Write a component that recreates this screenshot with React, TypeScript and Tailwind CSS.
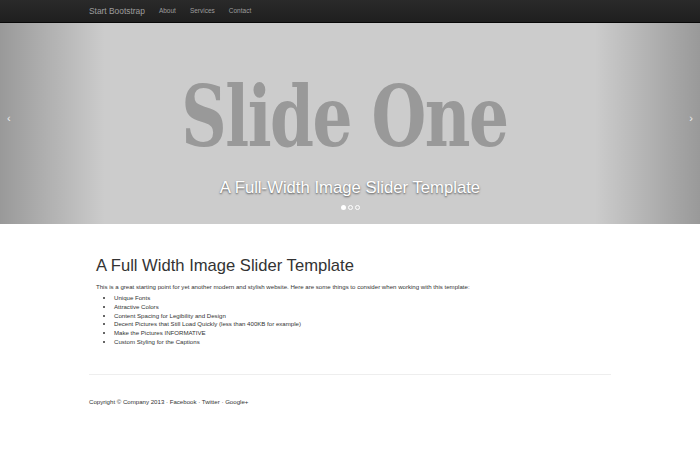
const items = [
  "Unique Fonts",
  "Attractive Colors",
  "Content Spacing for Legibility and Design",
  "Decent Pictures that Still Load Quickly (less than 400KB for example)",
  "Make the Pictures INFORMATIVE",
  "Custom Styling for the Captions",
];

export default function App() {
  return (
    <div className="w-[700px] h-[450px] bg-white text-[#333] font-['Liberation_Sans',Arial,sans-serif] overflow-hidden">
      {/* navbar */}
      <nav className="h-[23px] bg-gradient-to-b from-[#2a2a2a] to-[#1f1f1f] border-b border-[#080808]">
        <div className="w-[522px] mx-auto h-full flex items-center">
          <span className="text-[8.4px] text-[#9d9d9d]">Start Bootstrap</span>
          <div className="flex gap-[14px] ml-[14px] text-[6.5px] text-[#9d9d9d]">
            <span>About</span>
            <span>Services</span>
            <span>Contact</span>
          </div>
        </div>
      </nav>

      {/* carousel */}
      <div className="relative h-[201px] bg-[#cccccc] flex flex-col items-center">
        <div className="absolute left-0 top-0 h-full w-[105px] bg-gradient-to-r from-black/25 to-transparent" />
        <div className="absolute right-0 top-0 h-full w-[105px] bg-gradient-to-l from-black/25 to-transparent" />
        <span className="absolute left-[7px] top-[87px] text-[11px] text-white/80">‹</span>
        <span className="absolute right-[7px] top-[87px] text-[11px] text-white/80">›</span>

        <div className="mt-[51px] mr-[12px] leading-none text-[85px] font-bold text-[#999] font-['DejaVu_Serif',serif] tracking-[-2px] scale-x-[0.74] whitespace-nowrap">
          Slide One
        </div>
        <div className="mt-[16px] text-[16.7px] text-white [text-shadow:0_1px_2px_rgba(0,0,0,0.6)]">
          A Full-Width Image Slider Template
        </div>
        <div className="mt-[5px] flex gap-[2px] items-center">
          <span className="w-[5px] h-[5px] rounded-full bg-white" />
          <span className="w-[5px] h-[5px] rounded-full border border-white" />
          <span className="w-[5px] h-[5px] rounded-full border border-white" />
        </div>
      </div>

      {/* content */}
      <div className="w-[522px] mx-auto">
        <div className="px-[7px]">
          <h1 className="mt-[31px] text-[16.6px] leading-[22px] text-[#333]">A Full Width Image Slider Template</h1>
          <p className="mt-[5px] text-[6.1px] leading-[9px]">
            This is a great starting point for yet another modern and stylish website. Here are some things to consider when working with this template:
          </p>
          <ul className="mt-[3px] pl-[18px] list-disc text-[6.1px] leading-[8.8px]">
            {items.map((t) => (
              <li key={t}>{t}</li>
            ))}
          </ul>
        </div>
        <hr className="mt-[27px] border-[#eee]" />
        <footer className="mt-[22px] text-[6.1px] leading-[9px]">
          Copyright © Company 2013 · Facebook · Twitter · Google+
        </footer>
      </div>
    </div>
  );
}
